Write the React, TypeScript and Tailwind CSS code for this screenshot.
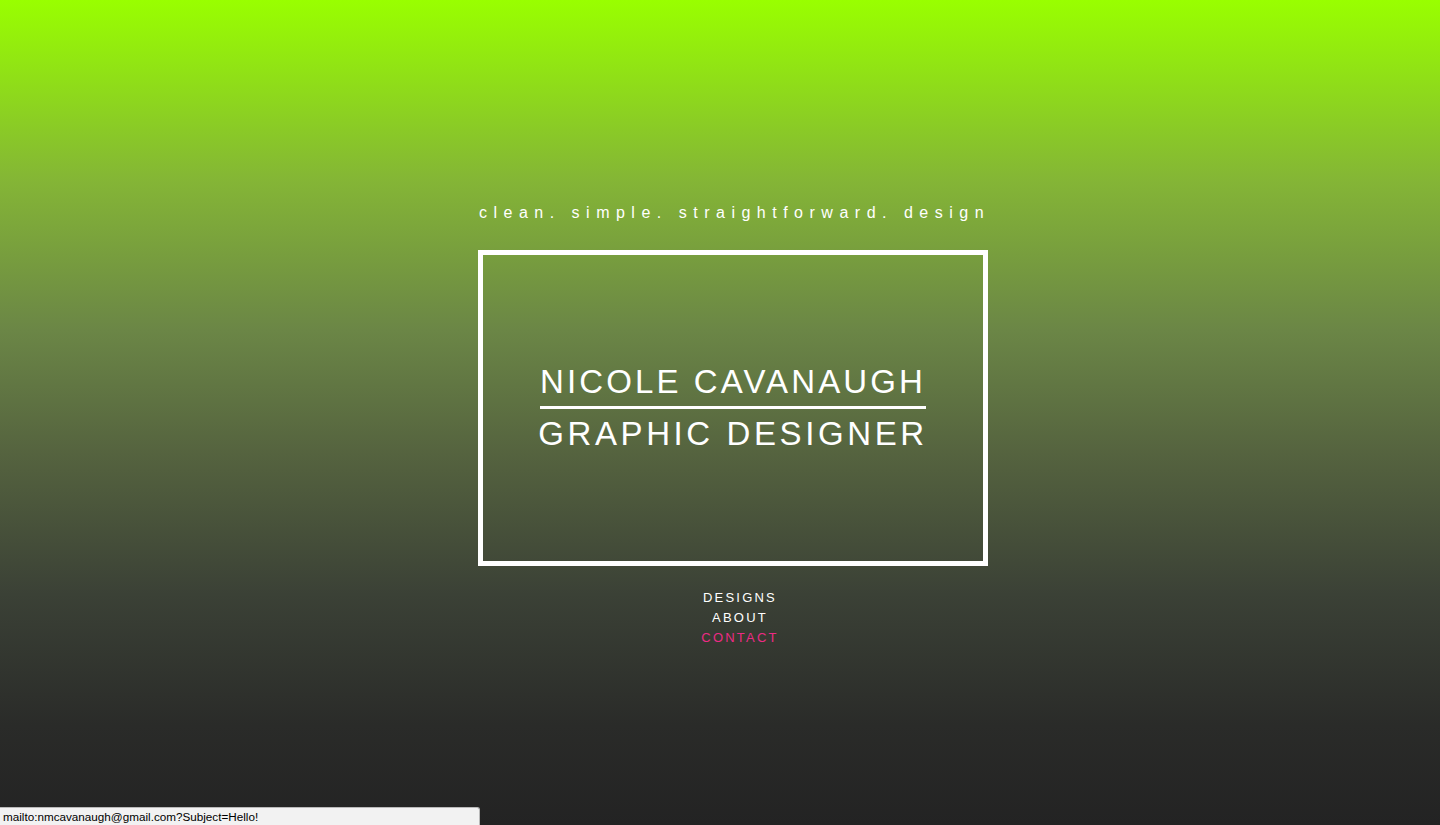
export default function App() {
  return (
    <div className="relative h-[825px] w-full overflow-hidden bg-[linear-gradient(to_bottom,#99ff00_0%,#84b536_22%,#6b8646_40%,#55633f_55%,#3b4136_72%,#2a2b29_88%,#232323_100%)] font-['Liberation_Sans',Arial,sans-serif] text-white">
      <div className="ml-[26px] flex flex-col items-center pt-[203px]">
        <p className="pl-[3px] text-[16px] leading-5 tracking-[6.5px]">
          clean. simple. straightforward. design
        </p>

        <div className="mt-[27px] flex h-[316px] w-[510px] items-center justify-center border-[5px] border-white">
          <div className="flex flex-col items-center">
            <h1 className="text-[33px] leading-[38px] tracking-[3.1px]">
              NICOLE CAVANAUGH
            </h1>
            <div className="mt-[5px] h-[3px] w-[386px] bg-white" />
            <h2 className="mt-[6px] text-[33px] leading-[38px] tracking-[3.6px]">
              GRAPHIC DESIGNER
            </h2>
          </div>
        </div>

        <nav className="mt-[22px] ml-[12px] flex flex-col items-center text-[13px] leading-5 tracking-[2.2px]">
          <a className="pl-[2px]">DESIGNS</a>
          <a className="pl-[2px]">ABOUT</a>
          <a className="pl-[2px] text-[#ec2a84]">CONTACT</a>
        </nav>
      </div>

      {/* browser link preview bubble */}
      <div className="absolute bottom-0 left-0 h-[18px] w-[480px] rounded-tr-[3px] border border-b-0 border-l-0 border-[#b9b9b9] bg-[#f2f2f2] pl-[3px] text-[11.7px] leading-[17px] text-black">
        mailto:nmcavanaugh@gmail.com?Subject=Hello!
      </div>
    </div>
  );
}
